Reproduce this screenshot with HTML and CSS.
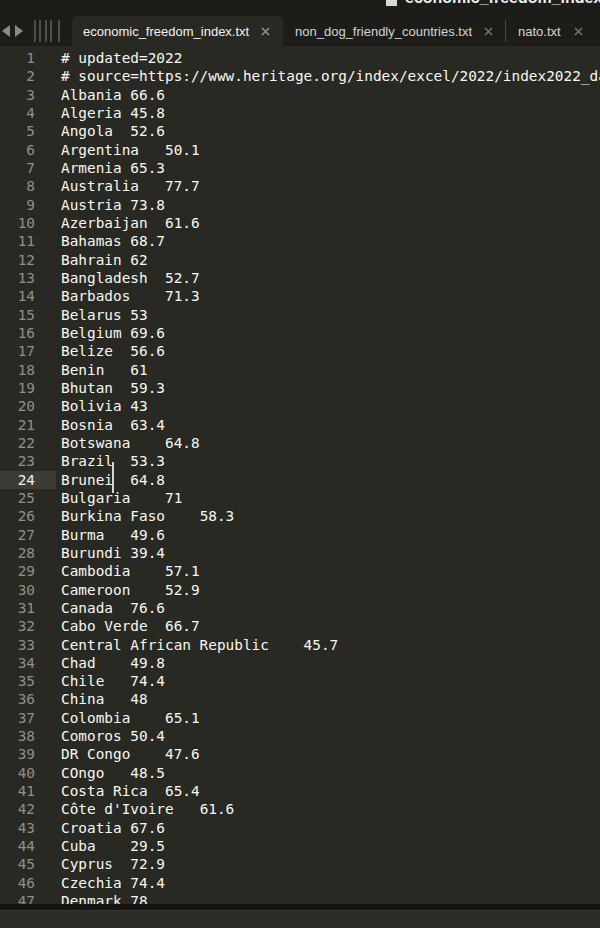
FILE: index.html
```html
<!DOCTYPE html>
<html>
<head>
<meta charset="utf-8">
<link rel="stylesheet" href="styles.css">
</head>
<body>
<div class="titlebar"><span class="doc-icon"></span><span class="title">economic_freedom_index.txt</span></div>
<div class="tabbar">
  <div class="nav">
    <svg width="26" height="14" viewBox="0 0 26 14"><path d="M10 1 L2 7 L10 13 Z" fill="#8a8a86"/><path d="M15 1 L23 7 L15 13 Z" fill="#8a8a86"/></svg>
  </div>
  <div class="bars">
    <svg width="30" height="24" viewBox="0 0 30 24"><g stroke="#5c5c58" stroke-width="1.6"><line x1="1" y1="0" x2="1" y2="22"/><line x1="6" y1="0" x2="6" y2="22"/><line x1="12" y1="0" x2="12" y2="22"/><line x1="17" y1="0" x2="17" y2="22"/><line x1="25" y1="0" x2="25" y2="22"/></g></svg>
  </div>
  <div class="tab active"><span>economic_freedom_index.txt</span><svg class="x" width="9" height="9" viewBox="0 0 9 9"><path d="M1 1 L8 8 M8 1 L1 8" stroke="#8d8d89" stroke-width="1.7"/></svg></div>
  <div class="tab second"><span>non_dog_friendly_countries.txt</span><svg class="x" width="9" height="9" viewBox="0 0 9 9"><path d="M1 1 L8 8 M8 1 L1 8" stroke="#6f6f6b" stroke-width="1.7"/></svg></div>
  <div class="tab third"><span>nato.txt</span><svg class="x" width="9" height="9" viewBox="0 0 9 9"><path d="M1 1 L8 8 M8 1 L1 8" stroke="#6f6f6b" stroke-width="1.7"/></svg></div>
</div>
<div class="editor">
<div class="line"><span class="num">1</span><span class="code"># updated=2022</span></div>
<div class="line"><span class="num">2</span><span class="code"># source=https://www.heritage.org/index/excel/2022/index2022_data.xls</span></div>
<div class="line"><span class="num">3</span><span class="code">Albania 66.6</span></div>
<div class="line"><span class="num">4</span><span class="code">Algeria 45.8</span></div>
<div class="line"><span class="num">5</span><span class="code">Angola	52.6</span></div>
<div class="line"><span class="num">6</span><span class="code">Argentina	50.1</span></div>
<div class="line"><span class="num">7</span><span class="code">Armenia 65.3</span></div>
<div class="line"><span class="num">8</span><span class="code">Australia	77.7</span></div>
<div class="line"><span class="num">9</span><span class="code">Austria 73.8</span></div>
<div class="line"><span class="num">10</span><span class="code">Azerbaijan	61.6</span></div>
<div class="line"><span class="num">11</span><span class="code">Bahamas 68.7</span></div>
<div class="line"><span class="num">12</span><span class="code">Bahrain 62</span></div>
<div class="line"><span class="num">13</span><span class="code">Bangladesh	52.7</span></div>
<div class="line"><span class="num">14</span><span class="code">Barbados	71.3</span></div>
<div class="line"><span class="num">15</span><span class="code">Belarus 53</span></div>
<div class="line"><span class="num">16</span><span class="code">Belgium 69.6</span></div>
<div class="line"><span class="num">17</span><span class="code">Belize	56.6</span></div>
<div class="line"><span class="num">18</span><span class="code">Benin	61</span></div>
<div class="line"><span class="num">19</span><span class="code">Bhutan	59.3</span></div>
<div class="line"><span class="num">20</span><span class="code">Bolivia 43</span></div>
<div class="line"><span class="num">21</span><span class="code">Bosnia	63.4</span></div>
<div class="line"><span class="num">22</span><span class="code">Botswana	64.8</span></div>
<div class="line"><span class="num">23</span><span class="code">Brazil	53.3</span></div>
<div class="line current"><span class="num">24</span><span class="code">Brunei	64.8</span></div>
<div class="line"><span class="num">25</span><span class="code">Bulgaria	71</span></div>
<div class="line"><span class="num">26</span><span class="code">Burkina Faso	58.3</span></div>
<div class="line"><span class="num">27</span><span class="code">Burma	49.6</span></div>
<div class="line"><span class="num">28</span><span class="code">Burundi 39.4</span></div>
<div class="line"><span class="num">29</span><span class="code">Cambodia	57.1</span></div>
<div class="line"><span class="num">30</span><span class="code">Cameroon	52.9</span></div>
<div class="line"><span class="num">31</span><span class="code">Canada	76.6</span></div>
<div class="line"><span class="num">32</span><span class="code">Cabo Verde	66.7</span></div>
<div class="line"><span class="num">33</span><span class="code">Central African Republic	45.7</span></div>
<div class="line"><span class="num">34</span><span class="code">Chad	49.8</span></div>
<div class="line"><span class="num">35</span><span class="code">Chile	74.4</span></div>
<div class="line"><span class="num">36</span><span class="code">China	48</span></div>
<div class="line"><span class="num">37</span><span class="code">Colombia	65.1</span></div>
<div class="line"><span class="num">38</span><span class="code">Comoros 50.4</span></div>
<div class="line"><span class="num">39</span><span class="code">DR Congo	47.6</span></div>
<div class="line"><span class="num">40</span><span class="code">COngo	48.5</span></div>
<div class="line"><span class="num">41</span><span class="code">Costa Rica	65.4</span></div>
<div class="line"><span class="num">42</span><span class="code">Côte d'Ivoire	61.6</span></div>
<div class="line"><span class="num">43</span><span class="code">Croatia 67.6</span></div>
<div class="line"><span class="num">44</span><span class="code">Cuba	29.5</span></div>
<div class="line"><span class="num">45</span><span class="code">Cyprus	72.9</span></div>
<div class="line"><span class="num">46</span><span class="code">Czechia 74.4</span></div>
<div class="line"><span class="num">47</span><span class="code">Denmark 78</span></div>
<div class="line"><span class="num">48</span><span class="code">Djibouti	56.2</span></div>
<div class="caret"></div>
</div>
<div class="hscroll"></div>
<div class="status"></div>
</body>
</html>
```
FILE: styles.css
```css
html, body {
  margin: 0;
  padding: 0;
  background: #282923;
  width: 600px;
  height: 928px;
  overflow: hidden;
}
.titlebar {
  height: 14px;
  background: #1c1d19;
  display: flex;
  align-items: flex-start;
  overflow: hidden;
  padding-left: 386px;
  gap: 8px;
}
.doc-icon {
  display: block;
  width: 11px;
  height: 14px;
  margin-top: -8px;
  background: #d8d8d6;
  flex: none;
}
.title {
  font-family: "Liberation Sans", Arial, sans-serif;
  font-weight: bold;
  font-size: 16px;
  line-height: 16px;
  margin-top: -10px;
  color: #f0f0ee;
  white-space: nowrap;
}
.tabbar {
  height: 32px;
  background: #1c1d19;
  display: flex;
  align-items: stretch;
}
.nav {
  width: 34px;
  display: flex;
  align-items: center;
  padding-top: 2px;
  flex: none;
}
.nav svg { display: block; }
.bars {
  width: 38px;
  display: flex;
  align-items: flex-start;
  padding-top: 6px;
  flex: none;
}
.bars svg { display: block; }
.tab {
  display: flex;
  align-items: center;
  justify-content: space-between;
  font-family: "Liberation Sans", Arial, sans-serif;
  font-size: 13px;
  color: #d4d4d2;
  white-space: nowrap;
  margin-top: 2px;
  box-sizing: border-box;
  flex: none;
}
.tab .x { display: block; }
.tab.active {
  width: 211px;
  background: #282923;
  border-radius: 6px 6px 0 0;
  padding: 0 13px 0 11px;
  color: #f2f2f0;
}
.tab.second {
  width: 223px;
  padding: 0 12px 0 12px;
  border-right: 1px solid #46463f;
  margin-top: 6px;
  margin-bottom: 4px;
}
.tab.third {
  width: 94px;
  padding: 0 17px 0 12px;
}
.editor {
  position: relative;
  height: 858px;
  overflow: hidden;
  padding-top: 3px;
  box-sizing: border-box;
  font-family: "DejaVu Sans Mono", Menlo, monospace;
  font-size: 14.4px;
  line-height: 18.33px;
}
.line {
  display: flex;
  height: 18.33px;
}
.num {
  width: 56px;
  box-sizing: border-box;
  padding-right: 21px;
  text-align: right;
  color: #8f908a;
  flex: none;
}
.line.current .num {
  background: #3b3c35;
  color: #f0f0ea;
}
.code {
  padding-left: 5px;
  white-space: pre;
  tab-size: 4;
  -moz-tab-size: 4;
  color: #f8f8f2;
}
.caret {
  position: absolute;
  left: 112px;
  top: 416px;
  width: 1.5px;
  height: 31px;
  background: #d8d8d2;
}
.hscroll {
  height: 6px;
  background: #141510;
  border-bottom: 1px solid #34352f;
}
.status {
  height: 17px;
  background: #2b2c27;
}
```
